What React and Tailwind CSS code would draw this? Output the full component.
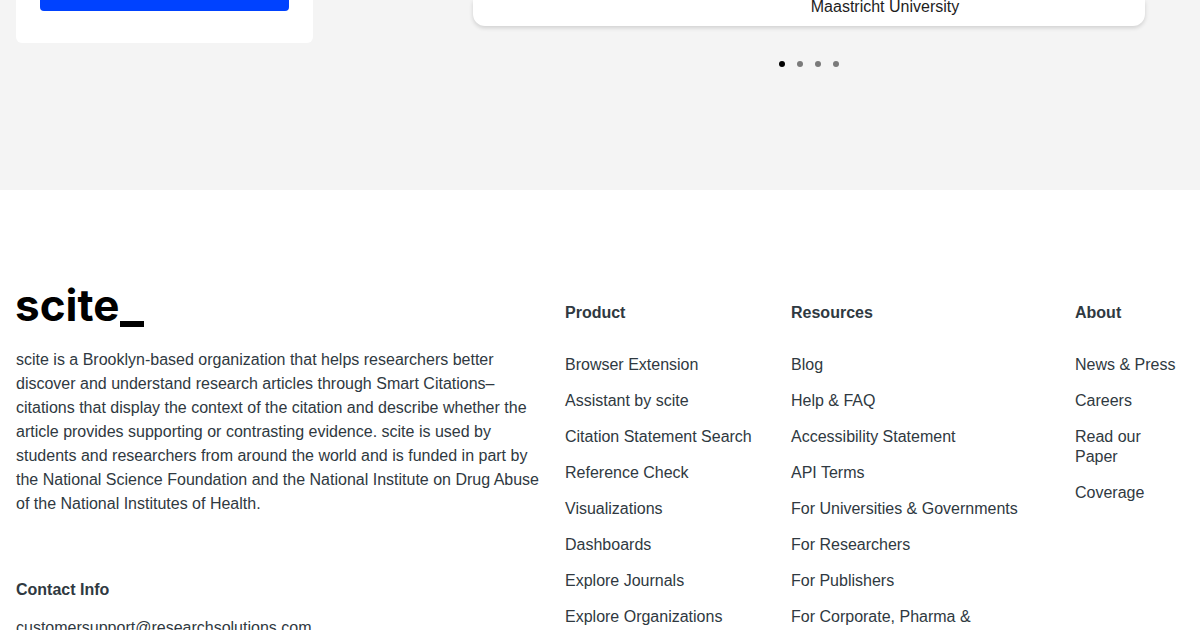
import React from 'react';

const columns = [
  {
    title: 'Product',
    links: [
      'Browser Extension',
      'Assistant by scite',
      'Citation Statement Search',
      'Reference Check',
      'Visualizations',
      'Dashboards',
      'Explore Journals',
      'Explore Organizations',
    ],
  },
  {
    title: 'Resources',
    links: [
      'Blog',
      'Help & FAQ',
      'Accessibility Statement',
      'API Terms',
      'For Universities & Governments',
      'For Researchers',
      'For Publishers',
      'For Corporate, Pharma &',
    ],
  },
  {
    title: 'About',
    links: ['News & Press', 'Careers', 'Read our Paper', 'Coverage'],
  },
];

const Logo = () => (
  <svg className="block w-32 h-10 overflow-visible" viewBox="0 0 128 40" role="img" aria-label="scite">
    <text x="-1" y="34" fontSize="44" fontWeight="700" className="font-['Inter',sans-serif]">
      scite
    </text>
    <rect x="104" y="34" width="24" height="6" />
  </svg>
);

const Testimonials = () => (
  <section className="flex items-start bg-[#f4f4f4] px-4 pb-[123px]">
    <div className="w-[297px] bg-white rounded-b-md px-6 pb-8">
      <button type="button" aria-label="Get started" className="block w-full h-[11px] bg-[#0042ff] rounded-b" />
    </div>
    <div className="flex-1 ml-40 mr-[39px]">
      <div className="bg-white rounded-b-xl shadow-[0_2px_4px_rgba(0,0,0,0.15)] pb-[7px] pl-[152px] text-center text-[#1d1d1d]">
        <p className="h-[19px] flex items-end justify-center leading-6">Maastricht University</p>
      </div>
      <div className="flex justify-center gap-3 mt-[35px]">
        {[0, 1, 2, 3].map(i => (
          <button
            key={i}
            type="button"
            aria-label={`Slide ${i + 1}`}
            className={i === 0 ? 'size-[6px] rounded-full bg-black' : 'size-[6px] rounded-full bg-[#7a7a7a]'}
          />
        ))}
      </div>
    </div>
  </section>
);

const Footer = () => (
  <footer className="grid grid-cols-[525fr_202fr_260fr_101fr] gap-x-6 bg-white pl-4 pr-6 pt-[97px] text-[#2f3941]">
    <div>
      <Logo />
      <p className="mt-[21px] leading-6">
        scite is a Brooklyn-based organization that helps researchers better discover and understand
        research articles through Smart Citations–citations that display the context of the citation
        and describe whether the article provides supporting or contrasting evidence. scite is used by
        students and researchers from around the world and is funded in part by the National Science
        Foundation and the National Institute on Drug Abuse of the National Institutes of Health.
      </p>
      <h4 className="mt-16 font-bold leading-5">Contact Info</h4>
      <a href="mailto:customersupport@researchsolutions.com" className="block mt-4 leading-6">
        customersupport@researchsolutions.com
      </a>
    </div>
    {columns.map(column => (
      <nav key={column.title} className="pt-4 leading-5">
        <h4 className="font-bold">{column.title}</h4>
        <ul className="mt-8 space-y-4">
          {column.links.map(link => (
            <li key={link}>
              <a href="#">{link}</a>
            </li>
          ))}
        </ul>
      </nav>
    ))}
  </footer>
);

const App = () => {
  return (
    <div className="font-['Liberation_Sans',Arial,sans-serif] text-base">
      <Testimonials />
      <Footer />
    </div>
  );
};

export default App;
